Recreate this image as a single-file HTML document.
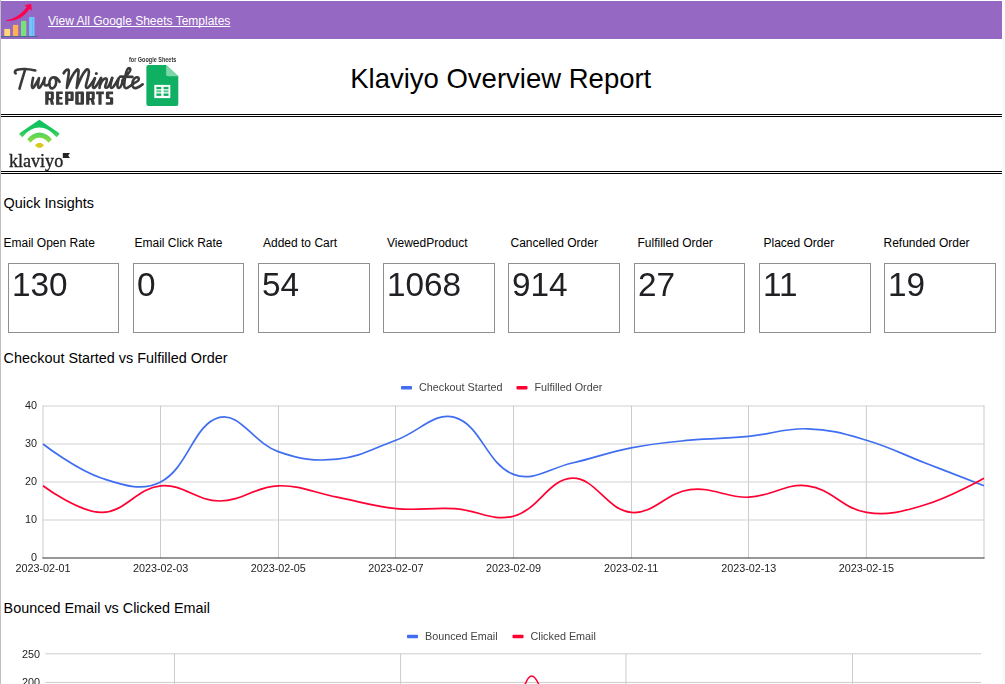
<!DOCTYPE html>
<html>
<head>
<meta charset="utf-8">
<title>Klaviyo Overview Report</title>
<style>
html,body{margin:0;padding:0;}
body{width:1005px;height:684px;overflow:hidden;background:#fff;position:relative;font-family:"Liberation Sans",sans-serif;color:#000;}
.abs{position:absolute;white-space:nowrap;}
#leftedge{left:0;top:0;width:1px;height:684px;background:#c0c0c0;}
#rightstrip{left:1002px;top:0;width:3px;height:684px;background:#f8f9fa;}
#bar{left:1px;top:1px;width:1001px;height:37.5px;background:#9568c3;}
#link{left:48px;top:14.2px;font-size:12px;line-height:14px;color:#fff;text-decoration:underline;text-decoration-skip-ink:none;}
.dbl{left:1px;width:1001px;height:1px;border-top:1px solid #000;border-bottom:1px solid #000;}
#title{left:350.2px;top:63px;font-size:27.5px;line-height:32px;}
.h{font-size:14.4px;line-height:17px;left:3.6px;}
.lbl{font-size:12px;line-height:14px;top:236px;}
.box{top:263px;height:68px;border:1px solid #8f8f8f;box-sizing:content-box;}
.box span{will-change:transform;position:absolute;left:2.8px;top:2px;font-size:33.33px;line-height:38px;color:#202124;}
svg{position:absolute;left:0;top:0;}
svg text{font-family:"Liberation Sans",sans-serif;}
</style>
</head>
<body>
<div class="abs" id="leftedge"></div>
<div class="abs" id="rightstrip"></div>
<div class="abs" id="bar"></div>
<div class="abs" id="link">View All Google Sheets Templates</div>
<div class="abs dbl" style="top:114px"></div>
<div class="abs dbl" style="top:171px"></div>
<div class="abs" id="title">Klaviyo Overview Report</div>

<div class="abs h" style="top:194.8px">Quick Insights</div>
<div class="abs lbl" style="left:3.5px">Email Open Rate</div>
<div class="abs lbl" style="left:134.5px">Email Click Rate</div>
<div class="abs lbl" style="left:263px">Added to Cart</div>
<div class="abs lbl" style="left:387px">ViewedProduct</div>
<div class="abs lbl" style="left:510.5px">Cancelled Order</div>
<div class="abs lbl" style="left:637.5px">Fulfilled Order</div>
<div class="abs lbl" style="left:763.5px">Placed Order</div>
<div class="abs lbl" style="left:883.5px">Refunded Order</div>

<div class="abs box" style="left:8px;width:109px"><span>130</span></div>
<div class="abs box" style="left:133px;width:109px"><span>0</span></div>
<div class="abs box" style="left:258px;width:110px"><span>54</span></div>
<div class="abs box" style="left:383px;width:110px"><span>1068</span></div>
<div class="abs box" style="left:508px;width:110px"><span>914</span></div>
<div class="abs box" style="left:634px;width:109px"><span>27</span></div>
<div class="abs box" style="left:759px;width:110px"><span>11</span></div>
<div class="abs box" style="left:884px;width:110px"><span>19</span></div>

<div class="abs h" style="top:349.9px">Checkout Started vs Fulfilled Order</div>
<div class="abs h" style="top:599.8px">Bounced Email vs Clicked Email</div>

<!-- CHARTS -->
<svg id="charts" width="1005" height="684" viewBox="0 0 1005 684">
<rect x="42.50" y="405.5" width="1" height="153" fill="#cccccc"/>
<rect x="160.00" y="405.5" width="1" height="153" fill="#cccccc"/>
<rect x="278.00" y="405.5" width="1" height="153" fill="#cccccc"/>
<rect x="395.00" y="405.5" width="1" height="153" fill="#cccccc"/>
<rect x="513.00" y="405.5" width="1" height="153" fill="#cccccc"/>
<rect x="631.00" y="405.5" width="1" height="153" fill="#cccccc"/>
<rect x="748.00" y="405.5" width="1" height="153" fill="#cccccc"/>
<rect x="865.85" y="405.5" width="1" height="153" fill="#cccccc"/>
<rect x="983.50" y="405.5" width="1" height="153" fill="#cccccc"/>
<rect x="42.5" y="519.50" width="942" height="1" fill="#d2d2d2"/>
<rect x="42.5" y="481.50" width="942" height="1" fill="#d2d2d2"/>
<rect x="42.5" y="443.50" width="942" height="1" fill="#d2d2d2"/>
<rect x="42.5" y="405.50" width="942" height="1" fill="#d2d2d2"/>
<rect x="42.5" y="557.5" width="942" height="1" fill="#333333"/>
<path d="M43.00,444.00C43.00,444.00,76.60,470.06,101.81,478.20C123.65,485.26,141.67,491.80,160.62,482.00C188.72,467.48,192.99,424.24,219.44,417.40C240.04,412.08,253.11,442.67,278.25,451.60C300.16,459.39,314.02,461.43,337.06,459.20C361.07,456.87,372.59,448.47,395.88,440.20C419.64,431.75,434.22,411.45,454.69,417.40C481.27,425.13,486.33,463.87,513.50,474.40C533.38,482.11,548.95,468.28,572.31,463.00C596.00,457.64,607.32,452.41,631.12,447.80C654.37,443.29,666.34,442.49,689.94,440.20C713.39,437.93,725.30,438.67,748.75,436.40C772.35,434.11,784.16,428.04,807.56,428.80C831.21,429.56,843.46,433.54,866.38,440.20C890.51,447.22,901.66,453.88,925.19,463.00C948.71,472.12,984.00,485.80,984.00,485.80" fill="none" stroke="#406ef1" stroke-width="1.7"/>
<path d="M43.00,485.80C43.00,485.80,78.29,512.40,101.81,512.40C125.34,512.40,136.39,488.15,160.62,485.80C183.44,483.59,195.91,501.00,219.44,501.00C242.96,501.00,254.56,486.57,278.25,485.80C301.61,485.05,313.54,492.64,337.06,497.20C360.59,501.76,372.13,506.30,395.88,508.60C419.18,510.86,431.26,507.09,454.69,508.60C478.31,510.13,491.92,521.78,513.50,516.20C538.97,509.62,548.45,478.97,572.31,478.20C595.50,477.45,606.71,510.03,631.12,512.40C653.76,514.59,665.69,492.73,689.94,489.60C712.74,486.65,725.34,497.96,748.75,497.20C772.39,496.44,784.91,482.87,807.56,485.80C831.96,488.95,841.85,508.44,866.38,512.40C888.90,516.04,902.66,511.35,925.19,504.80C949.71,497.67,984.00,478.20,984.00,478.20" fill="none" stroke="#ff0033" stroke-width="1.7"/>
<text x="37" y="560.90" text-anchor="end" font-size="10.8" fill="#222">0</text>
<text x="37" y="522.90" text-anchor="end" font-size="10.8" fill="#222">10</text>
<text x="37" y="484.90" text-anchor="end" font-size="10.8" fill="#222">20</text>
<text x="37" y="446.90" text-anchor="end" font-size="10.8" fill="#222">30</text>
<text x="37" y="408.90" text-anchor="end" font-size="10.8" fill="#222">40</text>
<text x="43.00" y="572" text-anchor="middle" font-size="10.8" fill="#222">2023-02-01</text>
<text x="160.62" y="572" text-anchor="middle" font-size="10.8" fill="#222">2023-02-03</text>
<text x="278.25" y="572" text-anchor="middle" font-size="10.8" fill="#222">2023-02-05</text>
<text x="395.88" y="572" text-anchor="middle" font-size="10.8" fill="#222">2023-02-07</text>
<text x="513.50" y="572" text-anchor="middle" font-size="10.8" fill="#222">2023-02-09</text>
<text x="631.12" y="572" text-anchor="middle" font-size="10.8" fill="#222">2023-02-11</text>
<text x="748.75" y="572" text-anchor="middle" font-size="10.8" fill="#222">2023-02-13</text>
<text x="866.38" y="572" text-anchor="middle" font-size="10.8" fill="#222">2023-02-15</text>
<rect x="401" y="386.1" width="11" height="3.5" rx="0.8" fill="#406ef1"/>
<text x="419" y="391" font-size="10.8" fill="#444">Checkout Started</text>
<rect x="516.5" y="386.1" width="11" height="3.5" rx="0.8" fill="#ff0033"/>
<text x="534.5" y="391" font-size="10.8" fill="#444">Fulfilled Order</text>
<rect x="174.00" y="653.3" width="1" height="40" fill="#cccccc"/>
<rect x="400.10" y="653.3" width="1" height="40" fill="#cccccc"/>
<rect x="625.50" y="653.3" width="1" height="40" fill="#cccccc"/>
<rect x="852.00" y="653.3" width="1" height="40" fill="#cccccc"/>
<rect x="45.3" y="653.3" width="935.7" height="1" fill="#cccccc"/>
<rect x="45.3" y="681.9" width="935.7" height="1" fill="#cccccc"/>
<path d="M524.5,686 C527,679 529.5,676 531.7,676 C534,676 536.5,679 539.5,686" fill="none" stroke="#ff0033" stroke-width="1.6"/>
<text x="40" y="657.9" text-anchor="end" font-size="10.8" fill="#222">250</text>
<text x="40" y="686.3" text-anchor="end" font-size="10.8" fill="#222">200</text>
<rect x="407" y="634.7" width="11" height="3.5" rx="0.8" fill="#406ef1"/>
<text x="425" y="640" font-size="10.8" fill="#444">Bounced Email</text>
<rect x="512.5" y="634.7" width="11" height="3.5" rx="0.8" fill="#ff0033"/>
<text x="530.5" y="640" font-size="10.8" fill="#444">Clicked Email</text>
</svg>

<!-- LOGOS -->
<svg id="logos" width="1005" height="684" viewBox="0 0 1005 684">
<g id="icon">
<rect x="4.3" y="28.9" width="5.8" height="7.1" fill="#ffd77a"/>
<rect x="12.9" y="24.9" width="5.3" height="11.1" fill="#ffb055"/>
<rect x="21" y="20.9" width="5.3" height="15.1" fill="#78e07c"/>
<rect x="29.1" y="17" width="5.4" height="19" fill="#72c6ff"/>
<g fill="#5aa8f0"><rect x="32" y="18.3" width="1" height="1"/><rect x="32" y="20.3" width="1" height="1"/><rect x="32" y="22.3" width="1" height="1"/><rect x="32" y="24.3" width="1" height="1"/><rect x="32" y="26.3" width="1" height="1"/><rect x="32" y="28.3" width="1" height="1"/><rect x="32" y="30.3" width="1" height="1"/><rect x="32" y="32.3" width="1" height="1"/><rect x="32" y="34.3" width="1" height="1"/></g>
<rect x="1" y="36" width="37" height="1" fill="#476c8c"/>
<path d="M5.8,20.4 C13.4,19 21,15 26.8,6.9 L24.2,5.4 L31.1,3.8 L31.9,10.8 L29.5,8.8 C24.4,17.4 15.2,21.6 6,21.05 Z" fill="#ff0050"/>
</g>

<g id="tmr">
<g fill="none" stroke="#3a3a3a" stroke-width="2.6" stroke-linecap="round" stroke-linejoin="round">
<!-- T -->
<path d="M15.7,73.3 C14.3,72.6 14.5,70.6 17.2,69.8 C21,68.8 28,68.7 35.3,70.5"/>
<path d="M25.2,69 C24,74 21.5,81 19.5,88.7"/>
<!-- w -->
<path d="M33.1,77.9 C32.4,81 31.6,84.5 32,86.8 C32.3,88.6 33.2,88.4 34.2,86.8 C35.8,84.2 37.6,81 39,78.2 C38.4,81.5 37.7,85 38.2,86.9 C38.6,88.4 39.6,88.2 40.6,86.6 C42.2,84 43.8,80.8 44.8,77.9 C44.2,80.5 43.8,83 44.6,84.6 C45.6,86.2 47.5,85.5 49.4,83.6"/>
<!-- o -->
<path d="M53.4,77.4 C50.8,77.2 49.2,80.6 49.3,84 C49.4,87.2 51,88.8 52.8,88.2 C55.2,87.4 56.6,83.6 56.1,80.4 C55.7,78.2 54.6,77.3 53.4,77.4 C55.8,77.2 58.4,79.4 59.6,81.9"/>
<!-- M -->
<path d="M63.6,73.4 C64.5,71.5 66.4,69.6 67.9,69.6 C69.2,69.8 69,72 68.7,74 C68,78.5 67.2,83.5 66.9,87.9 C69.5,81 73.5,73 76.6,70 C77.8,68.8 78.6,69.4 78.6,71.2 C78.3,76 77.2,82.5 76.7,87.9 C79.5,80.5 83,73 86,70 C87.4,68.6 88.6,69.2 88.9,71.4 C89.2,75.5 86.2,82.5 85.9,86 C85.8,88 87,88.4 88.4,87.2 C90.4,85.4 92.6,82 94.6,78.6"/>
<!-- i -->
<path d="M95,78.2 C94.2,81 92.6,84.8 92.8,86.6 C93,88.2 94.2,88.2 95.4,87 C97.2,85 99,81.6 100.8,78.4"/>
<!-- n -->
<path d="M101.2,77.9 C100.5,81 99.8,84.8 99.5,87.9 M99.9,85.5 C101,82 103.8,78.2 105.7,78.2 C107.2,78.3 107,80.2 106.5,82 C106,84 105,85.6 105.2,86.8 C105.6,88.2 106.8,88.1 108,86.8 C109.6,85 110.9,81.4 112.2,78"/>
<!-- u -->
<path d="M112.2,77.9 C111.4,81 110.2,84.6 110.5,86.6 C110.8,88.4 112,88.4 113.2,87 C115,84.8 117,81.4 118.9,77.9 C118,81 117.2,84.6 117.5,86.6 C117.8,88.4 119.2,88.4 120.4,87 C121.6,85.6 122.2,83.4 122.6,80.6"/>
<!-- t -->
<path d="M122.5,80.4 C125.5,76.5 130.5,72 130.4,69.6 C130.2,67.6 128.4,67.8 127.4,69.4 C125.6,72.4 124.2,82 124.2,86 C124.3,88.4 126.2,88.6 128.1,87.4 C130.2,86 132,84.4 133.7,83.2"/>
<path d="M120.3,76.6 L132.5,76.9"/>
<!-- e -->
<path d="M133.7,83.2 C136.4,82.2 139,81 138.8,79 C138.6,77.2 136.8,76.8 135.4,77.8 C133.4,79.2 132.2,82.4 132.3,85 C132.5,87.6 134.4,88.6 136.4,88 C138.8,87.2 141,85.8 142.7,84.3"/>
</g>
<circle cx="96.3" cy="73.4" r="1.5" fill="#3a3a3a"/>
<!-- REPORTS -->
<g fill="#3a3a3a"><path fill-rule="evenodd" d="M45.2,91.6 h7.6 q1.1,0 1.1,1.1 v5.6 q0,1.1 -1,1.4 l1.2,5.1 h-3.2 l-1,-4.6 h-1.5 v4.6 h-3.2 Z M48.900000000000006,94.1 h1.9 v4 h-1.9 Z"/><path d="M56.1,91.6 h6.7 v2.3 h-3.5 v3.1 h2.9 v2.3 h-2.9 v3.2 h3.5 v2.3 h-6.7 Z"/><path fill-rule="evenodd" d="M65.1,91.6 h7.5 q1.1,0 1.1,1.1 v7.2 q0,1.1 -1.1,1.1 h-4.3 v3.8 h-3.2 Z M68.39999999999999,94.1 h2.1 v4.5 h-2.1 Z"/><path fill-rule="evenodd" d="M76.4,91.6 h6.4 q1.2,0 1.2,1.2 v10.8 q0,1.2 -1.2,1.2 h-6.4 q-1.2,0 -1.2,-1.2 v-10.8 q0,-1.2 1.2,-1.2 Z M78.7,93.89999999999999 h1.9 v8.7 h-1.9 Z"/><path fill-rule="evenodd" d="M86.1,91.6 h7.6 q1.1,0 1.1,1.1 v5.6 q0,1.1 -1,1.4 l1.2,5.1 h-3.2 l-1,-4.6 h-1.5 v4.6 h-3.2 Z M89.8,94.1 h1.9 v4 h-1.9 Z"/><path d="M96.1,91.6 h7.8 v2.6 h-2.3 v10.6 h-3.2 v-10.6 h-2.3 Z"/><path d="M107.1,91.6 h6 v2.6 h-3.7 v3.1 h2.6 q1.2,0 1.2,1.2 v5.1 q0,1.2 -1.2,1.2 h-6.2 v-2.6 h4.2 v-3.3 h-2.9 q-1.2,0 -1.2,-1.2 v-4.9 q0,-1.2 1.2,-1.2 Z"/></g>
<!-- for Google Sheets -->
<text transform="translate(129,62) scale(0.705,1)" font-size="7.8" font-weight="bold" fill="#333" >for Google Sheets</text>
<!-- sheets icon -->
<path d="M148.4,65 H166.1 L178.3,76.2 V104 a2,2 0 0 1 -2,2 H148.4 a2,2 0 0 1 -2,-2 V67 a2,2 0 0 1 2,-2 Z" fill="#0fb061"/>
<path d="M166.1,65 L178.3,76.2 H168 a1.9,1.9 0 0 1 -1.9,-1.9 Z" fill="#7dd6a7"/>
<rect x="154.3" y="84.9" width="16" height="13.2" fill="#ffffff"/>
<g fill="#0fb061">
<rect x="156.4" y="86.9" width="4.9" height="2.3"/><rect x="163.6" y="86.9" width="4.9" height="2.3"/>
<rect x="156.4" y="93.5" width="4.9" height="2.4"/><rect x="163.6" y="93.5" width="4.9" height="2.4"/>
</g>
<g fill="#5fcf97">
<rect x="156.4" y="90.2" width="4.9" height="2.2"/><rect x="163.6" y="90.2" width="4.9" height="2.2"/>
</g>
</g>

<g id="klaviyo">
<defs>
<linearGradient id="kg1" x1="0" y1="0" x2="0" y2="1"><stop offset="0" stop-color="#0dc160"/><stop offset="0.6" stop-color="#18c75c"/><stop offset="1" stop-color="#4fd45a"/></linearGradient>
<linearGradient id="kg2" x1="0" y1="0" x2="0" y2="1"><stop offset="0" stop-color="#4fd45e"/><stop offset="1" stop-color="#93db3c"/></linearGradient>
</defs>
<path d="M38.6,120.2 Q39.4,119.5 40.2,120.2 L59,133 Q59.8,133.7 59.1,134.5 L57.1,136.7 Q56.4,137.3 55.7,136.6 C46,124.5 32.8,124.5 23.1,136.6 Q22.4,137.3 21.7,136.7 L19.7,134.5 Q19,133.7 19.8,133 Z" fill="url(#kg1)"/>
<path d="M27.2,139.3 C34.5,130.2 44.3,130.2 51.9,139.3 L48.6,142.8 C43.2,136.2 35.6,136.2 30.6,142.8 Z" fill="url(#kg2)"/>
<path d="M35,145.2 C37.6,141.8 41.4,141.8 44,145.2 C41.6,148.6 37.4,148.6 35,145.2 Z" fill="#d6ca22"/>
<text transform="translate(8.9,166.6) scale(0.98,1)" style="font-family:&quot;Liberation Serif&quot;,serif" font-size="18.5" fill="#232323" stroke="#232323" stroke-width="0.35">klaviyo</text>
<path d="M62.8,153.1 H70 L68.2,155.55 L70,158 H62.8 Z" fill="#262626"/>
</g>

</svg>
</body>
</html>
